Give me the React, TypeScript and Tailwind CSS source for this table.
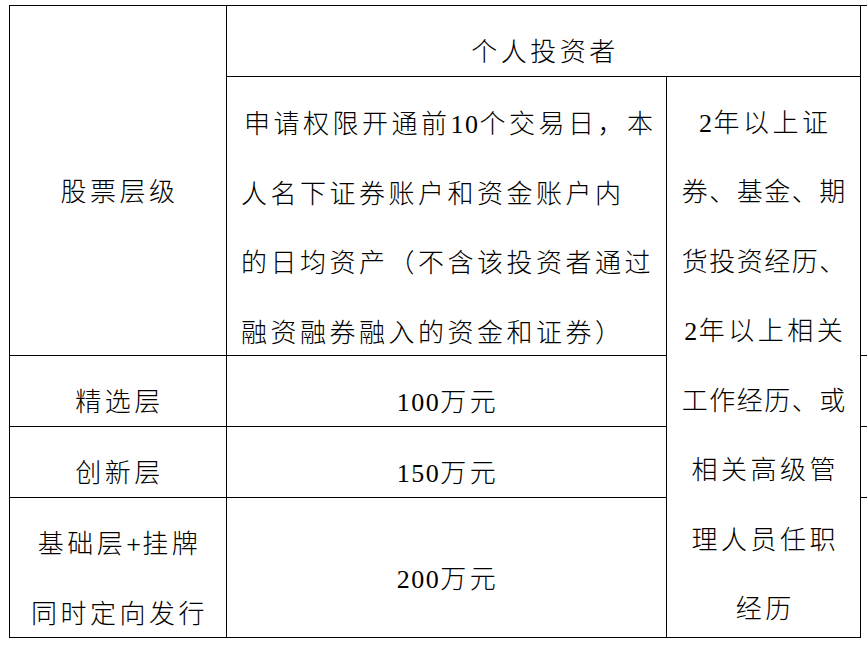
import React from "react";

const D = ({ children }: { children: React.ReactNode }) => (
  <span className="tracking-[1.5px]">{children}</span>
);

export default function App() {
  return (
    <div className="w-[867px] h-[655px] overflow-hidden bg-white pt-[5px] pl-[9px] text-black font-['Liberation_Serif','Noto_Sans_CJK_SC',serif] font-light text-[26px] leading-[69.5px] tracking-[3.5px]">
      <div className="grid grid-cols-[217px_440px_195px_6px] grid-rows-[71px_279px_71px_71px_141px]">
        {/* 股票层级 */}
        <div className="row-span-2 border-l border-t border-black flex items-center justify-center pt-[24px] whitespace-nowrap pl-[3px]">
          股票层级
        </div>
        {/* 个人投资者 header */}
        <div className="col-span-2 border-l border-t border-r border-black flex items-center justify-center pt-[23px] whitespace-nowrap pl-[3px]">
          个人投资者
        </div>
        {/* overflow column */}
        <div className="row-span-2 border-t border-black" />
        {/* description */}
        <div className="border-l border-t border-black flex flex-col justify-center items-start pt-[26px] pl-[14px] whitespace-nowrap">
          <div className="pl-[3px]">
            申请权限开通前<D>10</D>个交易日，本
          </div>
          <div>人名下证券账户和资金账户内</div>
          <div>的日均资产（不含该投资者通过</div>
          <div>融资融券融入的资金和证券）</div>
        </div>
        {/* experience column */}
        <div className="row-span-4 border-l border-t border-r border-b border-black flex flex-col justify-center items-center pt-[19px] whitespace-nowrap">
          <div className="pl-[3.5px]">
            <D>2</D>年以上证
          </div>
          <div className="tracking-[1.5px] pl-[1.5px]">券、基金、期</div>
          <div className="tracking-[1.5px] pl-[1.5px]">货投资经历、</div>
          <div className="pl-[3.5px]">
            <D>2</D>年以上相关
          </div>
          <div className="tracking-[1.5px] pl-[1.5px]">工作经历、或</div>
          <div className="pl-[3.5px]">相关高级管</div>
          <div className="pl-[3.5px]">理人员任职</div>
          <div className="pl-[3.5px]">经历</div>
        </div>
        {/* 精选层 */}
        <div className="border-l border-t border-black flex items-center justify-center pt-[24px] whitespace-nowrap pl-[3px]">
          精选层
        </div>
        <div className="border-l border-t border-black flex items-center justify-center pt-[24px] whitespace-nowrap pl-[3px]">
          <span>
            <D>100</D>万元
          </span>
        </div>
        <div className="border-t border-black" />
        {/* 创新层 */}
        <div className="border-l border-t border-black flex items-center justify-center pt-[24px] whitespace-nowrap pl-[3px]">
          创新层
        </div>
        <div className="border-l border-t border-black flex items-center justify-center pt-[24px] whitespace-nowrap pl-[3px]">
          <span>
            <D>150</D>万元
          </span>
        </div>
        <div className="border-t border-black" />
        {/* 基础层 */}
        <div className="border-l border-t border-b border-black flex flex-col items-center justify-center pt-[24px] whitespace-nowrap pl-[3px]">
          <div>
            基础层<D>+</D>挂牌
          </div>
          <div>同时定向发行</div>
        </div>
        <div className="border-l border-t border-b border-black flex items-center justify-center pt-[24px] whitespace-nowrap pl-[3px]">
          <span>
            <D>200</D>万元
          </span>
        </div>
        <div className="border-t border-black" />
      </div>
    </div>
  );
}
